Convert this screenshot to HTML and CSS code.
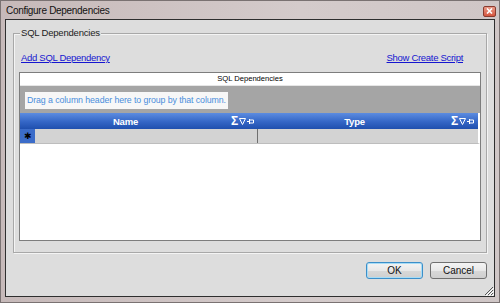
FILE: index.html
```html
<!DOCTYPE html>
<html lang="en">

<head>
    <meta charset="UTF-8">
    <title>Configure Dependencies</title>
    <link rel="stylesheet" href="styles.css">
</head>

<body>
    <!-- Dialog window -->
    <div class="window">
        <div class="titlebar">
            <span class="title">Configure Dependencies</span>
            <span class="close">
                <svg width="7" height="6" viewBox="0 0 7 6">
                    <path d="M1 0.5 L6 5.5 M6 0.5 L1 5.5" stroke="#fff" stroke-width="1.6"/>
                </svg>
            </span>
        </div>

        <div class="client">
            <div class="group">
                <span class="group-label">SQL Dependencies</span>

                <div class="links">
                    <a href="#">Add SQL Dependency</a>
                    <a href="#">Show Create Script</a>
                </div>

                <!-- Grid -->
                <div class="grid">
                    <div class="caption">SQL Dependencies</div>
                    <div class="groupby">
                        <span class="hint">Drag a column header here to group by that column.</span>
                    </div>
                    <div class="header-row">
                        <div class="col col-name">
                            <span class="col-title">Name</span>
                            <span class="col-icons">
                                <span class="sigma">&Sigma;</span>
                                <svg width="7" height="7" viewBox="0 0 7 7"><path d="M0.5 0.5 H6.5 L3.5 6.5 Z" fill="none" stroke="#fff"/></svg>
                                <svg width="7" height="7" viewBox="0 0 7 7"><path d="M0 3.5 H2 M2.5 1 V6 M2.5 2 H6.5 V5 H2.5" fill="none" stroke="#fff"/></svg>
                            </span>
                        </div>
                        <div class="col col-type">
                            <span class="col-title">Type</span>
                            <span class="col-icons">
                                <span class="sigma">&Sigma;</span>
                                <svg width="7" height="7" viewBox="0 0 7 7"><path d="M0.5 0.5 H6.5 L3.5 6.5 Z" fill="none" stroke="#fff"/></svg>
                                <svg width="7" height="7" viewBox="0 0 7 7"><path d="M0 3.5 H2 M2.5 1 V6 M2.5 2 H6.5 V5 H2.5" fill="none" stroke="#fff"/></svg>
                            </span>
                        </div>
                    </div>
                    <div class="new-row">
                        <div class="selector">&#10033;</div>
                        <div class="cell cell-name"></div>
                        <div class="cell cell-type"></div>
                    </div>
                    <div class="grid-body"></div>
                </div>
            </div>

            <div class="buttons">
                <button class="btn btn-ok">OK</button>
                <button class="btn">Cancel</button>
            </div>

            <svg class="grip" width="11" height="11" viewBox="0 0 11 11">
                <path d="M10 2 L2 10 M10 5 L5 10 M10 8 L8 10" stroke="#555" stroke-width="1"/>
                <path d="M11 3 L3 11 M11 6 L6 11 M11 9 L9 11" stroke="#fff" stroke-width="1"/>
            </svg>
        </div>
    </div>
</body>

</html>
```

FILE: styles.css
```css
/* Base */
body {
    margin: 0;
    padding: 0;
    font-family: 'Liberation Sans', Arial, sans-serif;
    font-size: 9.5px;
    letter-spacing: -0.2px;
    color: #000;
    background: #fff;
}

/* Window frame */
.window {
    width: 500px;
    height: 303px;
    box-sizing: border-box;
    background: linear-gradient(90deg, #c6b9b9, #d4cbcb 60%, #cfc6c6);
    border: 1px solid #7a7272;
    display: flex;
    flex-direction: column;
}

.titlebar {
    height: 18px;
    display: flex;
    align-items: center;
    justify-content: space-between;
    padding: 0 3px 0 5px;
}

.title {
    font-size: 10px;
    letter-spacing: -0.3px;
    color: #111;
}

.close {
    width: 13px;
    height: 11px;
    margin-top: 2px;
    box-sizing: border-box;
    border: 1px solid #8a3a2e;
    border-radius: 2px;
    background: linear-gradient(#e99a88, #d5553e);
    display: flex;
    align-items: center;
    justify-content: center;
}

/* Client area */
.client {
    position: relative;
    margin: 0 4px;
    height: 278px;
    box-sizing: border-box;
    background: #dddddd;
    border: 1px solid #2e2e2e;
    padding: 0 7px;
}

/* Group box */
.group {
    position: relative;
    margin-top: 13px;
    height: 220px;
    box-sizing: border-box;
    padding: 0 5px 10px;
    border: 1px solid #a8a8a8;
    box-shadow: inset 1px 1px 0 #f4f4f4, 1px 1px 0 #f4f4f4;
}

.group-label {
    position: absolute;
    top: -7px;
    left: 6px;
    padding: 0 1px;
    background: #dddddd;
    color: #222;
    line-height: 12px;
}

.links {
    display: flex;
    justify-content: space-between;
    height: 38px;
    padding: 18px 18px 0 2px;
    box-sizing: border-box;
    line-height: 12px;
}

.links a {
    color: #1515d0;
    text-decoration: underline;
    letter-spacing: -0.3px;
}

/* Grid */
.grid {
    height: 169px;
    box-sizing: border-box;
    border: 1px solid #7d7d7d;
    background: #fff;
    display: flex;
    flex-direction: column;
}

.caption {
    height: 12px;
    line-height: 12px;
    text-align: center;
    font-size: 7.6px;
    letter-spacing: 0;
    background: #fff;
    border-bottom: 1px solid #e6e6e6;
}

.groupby {
    height: 27px;
    background: #a5a5a5;
    padding: 6px 0 0 5px;
    box-sizing: border-box;
}

.hint {
    display: inline-block;
    height: 17px;
    line-height: 17px;
    padding: 0 2px;
    background: #f7f7f7;
    color: #4a8edc;
    font-size: 8.8px;
    letter-spacing: -0.1px;
}

.header-row {
    height: 16px;
    display: flex;
    background: linear-gradient(#5c8ce0, #3466c6 55%, #1f4fae);
    color: #fff;
    font-weight: bold;
    border-right: 2px solid #fff;
}

.col {
    display: flex;
    align-items: center;
}

.col-name {
    width: 238px;
}

.col-type {
    flex: 1;
}

.col-title {
    flex: 1;
    text-align: center;
}

.col-icons {
    display: flex;
    align-items: center;
    gap: 1px;
    padding-right: 4px;
}

.sigma {
    font-size: 12px;
    font-weight: bold;
    line-height: 12px;
}

.new-row {
    height: 14px;
    display: flex;
    background: #d3d3d3;
    border-bottom: 1px solid #bdbdbd;
    border-right: 2px solid #fff;
}

.selector {
    width: 15px;
    background: #3b6cc9;
    color: #000;
    font-size: 9px;
    line-height: 14px;
    text-align: center;
}

.cell-name {
    width: 222px;
    border-right: 1px solid #6f6f6f;
}

.cell-type {
    flex: 1;
}

.grid-body {
    flex: 1;
    background: #fff;
}

/* Buttons */
.buttons {
    display: flex;
    justify-content: flex-end;
    gap: 7px;
    margin-top: 9px;
}

.btn {
    width: 57px;
    height: 17px;
    padding: 0;
    font-family: 'Liberation Sans', Arial, sans-serif;
    font-size: 10px;
    color: #111;
    border: 1px solid #707070;
    border-radius: 3px;
    background: linear-gradient(#f4f4f4, #e8e8e8 50%, #d8d8d8 51%, #cfcfcf);
}

.btn-ok {
    border-color: #3c8fc9;
    box-shadow: inset 0 0 0 1px #a7dcf6;
}

.grip {
    position: absolute;
    right: 0;
    bottom: 0;
}
```
